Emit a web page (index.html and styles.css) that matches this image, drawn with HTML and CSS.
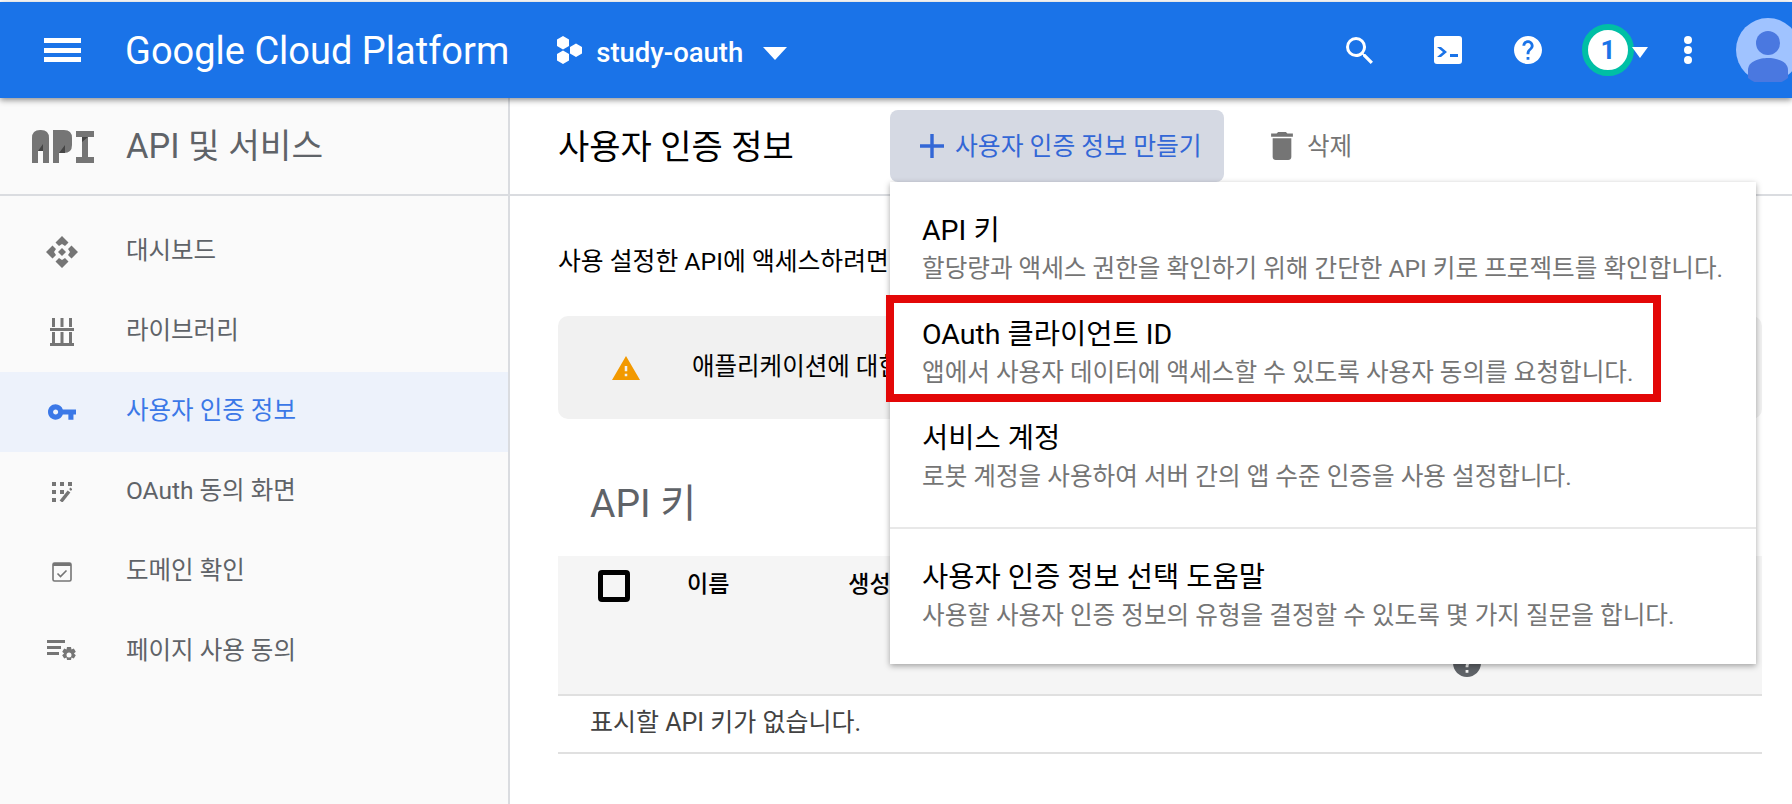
FILE: index.html
```html
<!DOCTYPE html>
<html lang="ko">
<head>
  <meta charset="UTF-8">
  <title>사용자 인증 정보</title>
  <link rel="stylesheet" href="styles.css">
</head>
<body>
  <header class="topbar">
    <button class="menu-btn"><span></span><span></span><span></span></button>
    <div class="brand">Google Cloud Platform</div>
    <svg class="project-icon" viewBox="0 0 28 28"><path d="M8 0l6 3.500v6.500l-6 3.500-6-3.500v-6.500zM8 14.500l6 3.500v6.500l-6 3.500-6-3.500v-6.500zM21 7.500l6 3.500v6.500l-6 3.500-6-3.500v-6.500z" fill="#fff"/></svg>
    <div class="project-name">study-oauth</div>
    <div class="caret"></div>
    <div class="top-actions">
      <svg class="ic-search" viewBox="3 3 17.500 17.500"><path fill="#fff" d="M15.500 14h-.79l-.28-.27A6.471 6.471 0 0 0 16 9.500 6.500 6.500 0 1 0 9.500 16c1.610 0 3.090-.59 4.230-1.570l.27.28v.79l5 4.990L20.490 19l-4.990-5zm-6 0C7.010 14 5 11.990 5 9.500S7.010 5 9.500 5 14 7.010 14 9.500 11.990 14 9.500 14z"/></svg>
      <svg class="ic-terminal" viewBox="0 0 28 28"><rect width="28" height="28" rx="3" fill="#fff"/><path d="M3 11h4l6 5-6 5H3l6-5z" fill="#1a73e8"/><rect x="16" y="18" width="8" height="3" fill="#1a73e8"/></svg>
      <svg class="ic-help" viewBox="2 2 20 20"><path fill="#fff" d="M12 2C6.480 2 2 6.480 2 12s4.480 10 10 10 10-4.480 10-10S17.520 2 12 2zm1 17h-2v-2h2v2zm2.070-7.750l-.9.920C13.450 12.900 13 13.500 13 15h-2v-.5c0-1.100.45-2.100 1.170-2.830l1.240-1.260c.37-.36.59-.86.59-1.410 0-1.100-.9-2-2-2s-2 .9-2 2H8c0-2.210 1.790-4 4-4s4 1.790 4 4c0 .88-.36 1.680-.93 2.250z"/></svg>
      <div class="badge">1</div>
      <div class="caret small"></div>
      <div class="dots"><i></i><i></i><i></i></div>
      <svg class="avatar" viewBox="0 0 64 64"><circle cx="32" cy="32" r="32" fill="#a0c3ff"/><circle cx="32" cy="25" r="12" fill="#4a78e0"/><path d="M12 60V52c0-9 12-12 20-12s20 3 20 12v8a32 32 0 0 1-40 0z" fill="#4a78e0"/></svg>
    </div>
  </header>

  <div class="layout">
    <aside class="sidebar">
      <div class="side-head">
        <svg class="api-logo" viewBox="0 0 62 33">
          <path fill="#757575" d="M0 33V8Q0 0 8 0h1q8 0 8 8v25h-6V21H6v12zM21 33V0h11q8 0 8 8v7q0 8-8 8h-5v10zM44 1h18v6h-6v20h6v6H44v-6h6V7h-6z"/>
          <path fill="#454545" d="M6 21l5-7v7zM27 23l6-8v8zM50 7h6l-6 5z"/>
        </svg>
        <div class="side-title">API 및 서비스</div>
      </div>
      <nav>
        <a class="nav-item">
          <span class="nav-icon"><svg width="32" height="32" viewBox="0 0 32 32"><path fill="#757575" d="M16 0l6.500 6.500L19 10l-3-2-3 2-3.500-3.500zM16 32l6.500-6.500L19 22l-3 2-3-2-3.500 3.500zM0 16l6.500-6.500L10 13l-2 3 2 3-3.500 3.500zM32 16l-6.500-6.500L22 13l2 3-2 3 3.500 3.500zM16 12l4 4-4 4-4-4z"/></svg></span>
          <span class="nav-label">대시보드</span>
        </a>
        <a class="nav-item">
          <span class="nav-icon"><svg width="24" height="28" viewBox="0 0 24 28"><path fill="#757575" d="M2 0h3v9H2zM10.500 0h3v9h-3zM19 0h3v9h-3zM0 10h24v3H0zM2 14h3v11H2zM10.500 14h3v11h-3zM19 14h3v11h-3zM0 25h24v3H0z"/></svg></span>
          <span class="nav-label">라이브러리</span>
        </a>
        <a class="nav-item active">
          <span class="nav-icon"><svg width="28" height="16" viewBox="1 6 22 12"><path fill="#3b78e7" d="M12.650 10C11.830 7.670 9.610 6 7 6c-3.310 0-6 2.690-6 6s2.690 6 6 6c2.610 0 4.830-1.670 5.650-4H17v4h4v-4h2v-4H12.650zM7 14c-1.100 0-2-.9-2-2s.9-2 2-2 2 .9 2 2-.9 2-2 2z"/></svg></span>
          <span class="nav-label">사용자 인증 정보</span>
        </a>
        <a class="nav-item">
          <span class="nav-icon"><svg width="20" height="20" viewBox="0 0 20 20"><path fill="#757575" d="M0 0h4v4H0zM8 0h4v4H8zM16 0h4v4h-4zM0 8h4v4H0zM8 8h4v4H8zM0 16h4v4H0z"/><path d="M9 19.500l8-10" stroke="#757575" stroke-width="3.500" fill="none"/><path d="M18 8l1.500-1.500" stroke="#757575" stroke-width="2.500" fill="none"/></svg></span>
          <span class="nav-label">OAuth 동의 화면</span>
        </a>
        <a class="nav-item">
          <span class="nav-icon"><svg width="20" height="20" viewBox="0 0 20 20"><rect x="1" y="1" width="18" height="18" rx="1.500" fill="none" stroke="#757575" stroke-width="1.600"/><rect x="1" y="1" width="18" height="3" fill="#757575"/><path d="M5.500 11.500l3 3 6-6" fill="none" stroke="#757575" stroke-width="1.600"/></svg></span>
          <span class="nav-label">도메인 확인</span>
        </a>
        <a class="nav-item">
          <span class="nav-icon"><svg width="30" height="24" viewBox="0 0 30 24"><path fill="#757575" d="M0 0h18v3H0zM0 6h14v3H0zM0 12h12v3H0z"/><path fill="#757575" fill-rule="evenodd" d="M20 7h4l.5 2.500 2.300-1 2 3.300-1.900 1.700 1.900 1.700-2 3.300-2.300-1-.5 2.500h-4l-.5-2.500-2.300 1-2-3.300 1.900-1.700-1.900-1.700 2-3.300 2.300 1zM22 12.500a2.500 2.500 0 1 0 0 5 2.500 2.500 0 0 0 0-5z"/></svg></span>
          <span class="nav-label">페이지 사용 동의</span>
        </a>
      </nav>
    </aside>

    <main class="main">
      <div class="main-head">
        <h1 class="page-title">사용자 인증 정보</h1>
        <button class="create-btn">
          <svg width="24" height="24" viewBox="5 5 14 14"><path fill="#3367d6" d="M19 13h-6v6h-2v-6H5v-2h6V5h2v6h6v2z"/></svg>
          <span>사용자 인증 정보 만들기</span>
        </button>
        <button class="delete-btn">
          <svg width="24" height="28" viewBox="5 3 14 18"><path fill="#757575" d="M6 19c0 1.100.9 2 2 2h8c1.100 0 2-.9 2-2V7H6v12zM19 4h-3.500l-1-1h-5l-1 1H5v2h14V4z"/></svg>
          <span>삭제</span>
        </button>
      </div>

      <div class="content">
        <p class="intro">사용 설정한 API에 액세스하려면</p>
        <div class="notice">
          <svg width="28" height="26" viewBox="1 2 22 19"><path fill="#f29900" d="M1 21h22L12 2 1 21zm12-3h-2v-2h2v2zm0-4h-2v-4h2v4z"/></svg>
          <span>애플리케이션에 대한</span>
        </div>
        <h2 class="section-title">API 키</h2>
        <div class="table-head">
          <div class="checkbox"></div>
          <div class="col-name">이름</div>
          <div class="col-date">생성</div>
          <svg class="col-help" width="28" height="28" viewBox="2 2 20 20"><path fill="#5f6368" d="M12 2C6.480 2 2 6.480 2 12s4.480 10 10 10 10-4.480 10-10S17.520 2 12 2zm1 17h-2v-2h2v2zm2.070-7.750l-.9.920C13.450 12.900 13 13.500 13 15h-2v-.5c0-1.100.45-2.100 1.170-2.830l1.240-1.260c.37-.36.59-.86.59-1.410 0-1.100-.9-2-2-2s-2 .9-2 2H8c0-2.210 1.790-4 4-4s4 1.790 4 4c0 .88-.36 1.680-.93 2.250z"/></svg>
        </div>
        <div class="table-empty">표시할 API 키가 없습니다.</div>
      </div>
    </main>
  </div>

  <div class="dropdown">
    <div class="dd-item">
      <div class="dd-title">API 키</div>
      <div class="dd-desc">할당량과 액세스 권한을 확인하기 위해 간단한 API 키로 프로젝트를 확인합니다.</div>
    </div>
    <div class="dd-item">
      <div class="dd-title">OAuth 클라이언트 ID</div>
      <div class="dd-desc">앱에서 사용자 데이터에 액세스할 수 있도록 사용자 동의를 요청합니다.</div>
    </div>
    <div class="dd-item">
      <div class="dd-title">서비스 계정</div>
      <div class="dd-desc">로봇 계정을 사용하여 서버 간의 앱 수준 인증을 사용 설정합니다.</div>
    </div>
    <div class="dd-item help">
      <div class="dd-title">사용자 인증 정보 선택 도움말</div>
      <div class="dd-desc">사용할 사용자 인증 정보의 유형을 결정할 수 있도록 몇 가지 질문을 합니다.</div>
    </div>
  </div>
  <div class="highlight"></div>
</body>
</html>
```

FILE: styles.css
```css
* {
  box-sizing: border-box;
}
html, body {
  height: 100%;
}
body {
  margin: 0;
  padding-top: 2px;
  background: #fff;
  overflow: hidden;
  font-family: Roboto, "Noto Sans CJK KR", sans-serif;
  color: #000;
}
button {
  font-family: inherit;
  border: 0;
  background: none;
  padding: 0;
}

/* top bar */
.topbar {
  position: relative;
  z-index: 3;
  display: flex;
  align-items: center;
  height: 96px;
  background: #1a73e8;
  box-shadow: 0 2px 6px rgba(0, 0, 0, 0.45);
  color: #fff;
}
.menu-btn {
  display: flex;
  flex-direction: column;
  justify-content: space-between;
  width: 37px;
  height: 24px;
  margin-left: 44px;
}
.menu-btn span {
  display: block;
  height: 5px;
  background: #fff;
}
.brand {
  margin: 2px 0 0 44px;
  font-size: 38px;
  white-space: nowrap;
}
.project-icon {
  width: 28px;
  height: 28px;
  margin-left: 46px;
}
.project-name {
  margin: 4px 0 0 13px;
  font-size: 27.500px;
  font-weight: 500;
}
.caret {
  width: 0;
  height: 0;
  margin: 6px 0 0 20px;
  border-left: 12px solid transparent;
  border-right: 12px solid transparent;
  border-top: 13px solid #fff;
}
.caret.small {
  margin: 4px 0 0 -2px;
  border-left-width: 8px;
  border-right-width: 8px;
  border-top-width: 11px;
}
.top-actions {
  display: flex;
  align-items: center;
  margin-left: auto;
}
.ic-search {
  width: 27px;
  height: 27px;
}
.ic-terminal {
  width: 28px;
  height: 28px;
  margin-left: 61px;
}
.ic-help {
  width: 28px;
  height: 28px;
  margin-left: 52px;
}
.badge {
  display: flex;
  align-items: center;
  justify-content: center;
  width: 52px;
  height: 52px;
  margin-left: 40px;
  border: 6px solid #00bfa5;
  border-radius: 50%;
  background: #fff;
  color: #1a73e8;
  font-size: 26px;
  font-weight: 700;
}
.dots {
  display: flex;
  flex-direction: column;
  gap: 2px;
  margin-left: 36px;
}
.dots i {
  display: block;
  width: 8px;
  height: 8px;
  border-radius: 50%;
  background: #fff;
}
.avatar {
  width: 64px;
  height: 64px;
  margin: 0 -8px 0 44px;
}

/* page */
.layout {
  display: flex;
  height: 706px;
}
.sidebar {
  flex: 0 0 510px;
  background: #fafafa;
  border-right: 2px solid #dadce0;
}
.side-head {
  display: flex;
  align-items: center;
  height: 98px;
  padding-left: 32px;
  border-bottom: 2px solid #dadce0;
}
.api-logo {
  width: 62px;
  height: 33px;
}
.side-title {
  margin: -7px 0 0 32px;
  font-size: 34.400px;
  color: #5f6368;
}
nav {
  padding-top: 16px;
}
.nav-item {
  display: flex;
  align-items: center;
  height: 80px;
  font-size: 24.500px;
  color: #5f6368;
}
.nav-item.active {
  background: #edf2fb;
  color: #3b78e7;
}
.nav-icon {
  display: flex;
  align-items: center;
  justify-content: center;
  flex: 0 0 36px;
  margin: 0 46px 0 44px;
}
.nav-label {
  margin-top: -7px;
}

.main {
  flex: 1;
}
.main-head {
  display: flex;
  align-items: center;
  height: 98px;
  padding-left: 48px;
  border-bottom: 2px solid #dadce0;
}
.page-title {
  width: 332px;
  margin: -4px 0 0;
  font-size: 34px;
  font-weight: 400;
}
.create-btn {
  display: flex;
  align-items: center;
  gap: 11px;
  width: 334px;
  height: 72px;
  padding-left: 30px;
  border-radius: 8px;
  background: #d5d9e3;
  color: #3367d6;
  font-size: 24.800px;
}
.delete-btn {
  display: flex;
  align-items: center;
  gap: 13px;
  margin-left: 46px;
  color: #757575;
  font-size: 24.500px;
}
.create-btn span,
.delete-btn span {
  margin-top: -4px;
}
.content {
  width: 1204px;
  margin-left: 48px;
}
.intro {
  margin: 48px 0 0;
  font-size: 24.800px;
  line-height: 36px;
}
.notice {
  display: flex;
  align-items: center;
  height: 103px;
  margin-top: 36px;
  padding-left: 54px;
  border-radius: 10px;
  background: #f1f1f1;
  font-size: 24.500px;
}
.notice span {
  margin-left: 52px;
  margin-top: -6px;
}
.section-title {
  margin: 59px 0 0 32px;
  font-size: 39px;
  font-weight: 400;
  line-height: 52px;
  color: #5f6368;
}
.table-head {
  display: flex;
  align-items: flex-start;
  height: 140px;
  margin-top: 26px;
  padding: 14px 0 0 40px;
  background: #f5f5f5;
  border-bottom: 2px solid #e0e0e0;
  font-size: 23px;
  font-weight: 500;
}
.checkbox {
  width: 32px;
  height: 32px;
  border: 5px solid #000;
  border-radius: 4px;
}
.col-name {
  margin: 2px 0 0 57px;
  line-height: 26px;
}
.col-date {
  margin: 2px 0 0 119px;
  line-height: 26px;
}
.col-help {
  margin: 79px 0 0 562px;
}
.table-empty {
  height: 58px;
  padding-left: 32px;
  border-bottom: 2px solid #e0e0e0;
  color: #424242;
  font-size: 25px;
  line-height: 54px;
}

/* create credentials menu */
.dropdown {
  position: absolute;
  z-index: 2;
  left: 890px;
  top: 182px;
  width: 866px;
  height: 482px;
  background: #fff;
  box-shadow: 0 2px 6px rgba(0, 0, 0, 0.35);
}
.dd-item {
  height: 104px;
  padding: 31px 0 0 32px;
}
.help {
  height: 137px;
  margin-top: 33px;
  border-top: 2px solid #e8e8e8;
}
.dd-title {
  font-size: 28.500px;
  line-height: 36px;
}
.dd-desc {
  margin-top: 3px;
  color: #757575;
  font-size: 24.600px;
  line-height: 34px;
  white-space: nowrap;
}
.highlight {
  position: absolute;
  z-index: 4;
  left: 886px;
  top: 295px;
  width: 775px;
  height: 107px;
  border: 8px solid #e30707;
}
```
